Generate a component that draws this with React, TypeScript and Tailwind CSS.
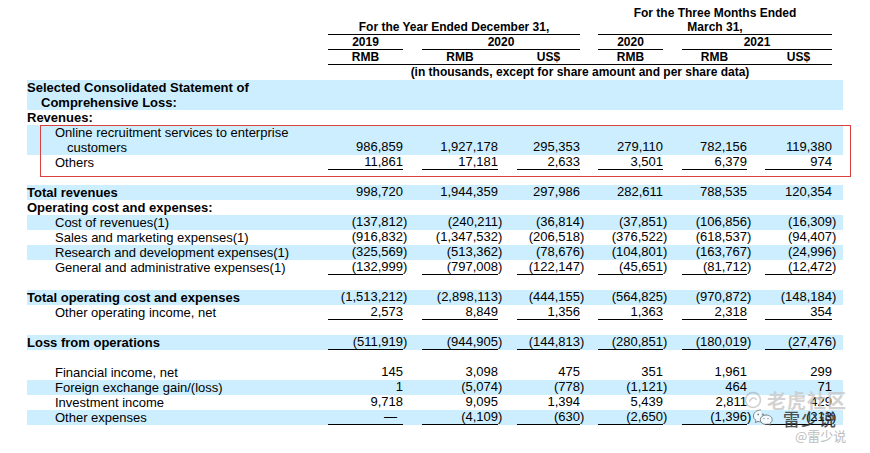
import type { ReactNode } from "react";

type Row = {
  label?: string[];
  indent?: "none" | "item";
  bold?: boolean;
  blue?: boolean;
  line?: boolean;
  vals?: string[];
};

const colW = ["w-[75px]", "w-[76px]", "w-[63px]", "w-[65px]", "w-[65px]", "w-[67px]"];
const grid = "grid grid-cols-[301px_94px_95px_81px_84px_83px_78px]";

const rows: Row[] = [
  { label: ["Selected Consolidated Statement of", "Comprehensive Loss:"], bold: true, blue: true },
  { label: ["Revenues:"], bold: true },
  {
    label: ["Online recruitment services to enterprise", "customers"],
    indent: "item",
    blue: true,
    vals: ["986,859", "1,927,178", "295,353", "279,110", "782,156", "119,380"],
  },
  {
    label: ["Others"],
    indent: "item",
    line: true,
    vals: ["11,861", "17,181", "2,633", "3,501", "6,379", "974"],
  },
  {},
  {
    label: ["Total revenues"],
    bold: true,
    blue: true,
    vals: ["998,720", "1,944,359", "297,986", "282,611", "788,535", "120,354"],
  },
  { label: ["Operating cost and expenses:"], bold: true },
  {
    label: ["Cost of revenues(1)"],
    indent: "item",
    blue: true,
    vals: ["(137,812)", "(240,211)", "(36,814)", "(37,851)", "(106,856)", "(16,309)"],
  },
  {
    label: ["Sales and marketing expenses(1)"],
    indent: "item",
    vals: ["(916,832)", "(1,347,532)", "(206,518)", "(376,522)", "(618,537)", "(94,407)"],
  },
  {
    label: ["Research and development expenses(1)"],
    indent: "item",
    blue: true,
    vals: ["(325,569)", "(513,362)", "(78,676)", "(104,801)", "(163,767)", "(24,996)"],
  },
  {
    label: ["General and administrative expenses(1)"],
    indent: "item",
    line: true,
    vals: ["(132,999)", "(797,008)", "(122,147)", "(45,651)", "(81,712)", "(12,472)"],
  },
  {},
  {
    label: ["Total operating cost and expenses"],
    bold: true,
    blue: true,
    vals: ["(1,513,212)", "(2,898,113)", "(444,155)", "(564,825)", "(970,872)", "(148,184)"],
  },
  {
    label: ["Other operating income, net"],
    indent: "item",
    line: true,
    vals: ["2,573", "8,849", "1,356", "1,363", "2,318", "354"],
  },
  {},
  {
    label: ["Loss from operations"],
    bold: true,
    blue: true,
    line: true,
    vals: ["(511,919)", "(944,905)", "(144,813)", "(280,851)", "(180,019)", "(27,476)"],
  },
  {},
  {
    label: ["Financial income, net"],
    indent: "item",
    vals: ["145", "3,098", "475", "351", "1,961", "299"],
  },
  {
    label: ["Foreign exchange gain/(loss)"],
    indent: "item",
    blue: true,
    vals: ["1", "(5,074)", "(778)", "(1,121)", "464", "71"],
  },
  {
    label: ["Investment income"],
    indent: "item",
    vals: ["9,718", "9,095", "1,394", "5,439", "2,811", "429"],
  },
  {
    label: ["Other expenses"],
    indent: "item",
    blue: true,
    line: true,
    vals: ["—", "(4,109)", "(630)", "(2,650)", "(1,396)", "(213)"],
  },
];

function Amount({ v }: { v: string }) {
  if (v === "—") return <span className="pr-[6px]">—</span>;
  if (v.startsWith("(")) {
    return (
      <>
        {v.slice(0, -1)}
        <span className="inline-block w-0">)</span>
      </>
    );
  }
  return <>{v}</>;
}

function TableRow({ row }: { row: Row }) {
  if (!row.label) return <div className="h-[15px]" />;
  const lines = row.label;
  return (
    <div className={`${grid} ${row.blue ? "bg-[#cceeff]" : ""}`}>
      <div className={`leading-[15px] ${row.bold ? "font-bold" : ""}`}>
        {lines.map((t, i) => (
          <div
            key={t}
            className={
              row.indent === "item"
                ? i === 0
                  ? "pl-[28px]"
                  : "pl-[40px]"
                : i === 0
                  ? "pl-0"
                  : "pl-[14px]"
            }
          >
            {t}
          </div>
        ))}
      </div>
      {(row.vals ?? ["", "", "", "", "", ""]).map((v, i) => (
        <div key={i} className="self-end">
          <div
            className={`box-border h-[15px] border-b text-right leading-[14px] ${colW[i]} ${
              row.line && row.vals ? "border-black" : "border-transparent"
            }`}
          >
            <Amount v={v} />
          </div>
        </div>
      ))}
    </div>
  );
}

function HeadCell({ w, line, children }: { w: string; line?: boolean; children: ReactNode }) {
  return (
    <div
      className={`box-border h-[15px] border-b text-center leading-[14px] ${w} ${
        line ? "border-black" : "border-transparent"
      }`}
    >
      {children}
    </div>
  );
}

function Watermark() {
  return (
    <div className="pointer-events-none absolute left-[744px] top-[391px] h-[52px] w-[120px]">
      <div className="flex items-center gap-[5px]">
        <svg width="18" height="18" viewBox="0 0 18 18" className="opacity-40">
          <circle cx="9" cy="9" r="7.5" fill="none" stroke="#888" strokeWidth="1.6" />
          <path d="M5.5 10.5 C7 6, 11 6, 12.5 9" fill="none" stroke="#888" strokeWidth="1.4" />
        </svg>
        <span className="font-['Noto_Sans_CJK_SC',sans-serif] text-[19px] font-bold leading-[18px] tracking-[1px] text-[#c8c8c8] opacity-80">
          老虎社区
        </span>
      </div>
      <div className="mt-[-1px] flex items-center gap-[9px] pl-[8px]">
        <svg width="22" height="20" viewBox="0 0 22 20" className="opacity-80">
          <path
            d="M9 2 C4.5 2 1.5 4.8 1.5 8 C1.5 9.8 2.4 11.3 4 12.4 L3.4 14.6 L6 13.4 C7 13.7 8 13.9 9 13.9"
            fill="#fff"
            stroke="#666"
            strokeWidth="1"
          />
          <path
            d="M14 7 C10.8 7 8.3 9.1 8.3 11.7 C8.3 14.3 10.8 16.4 14 16.4 C14.8 16.4 15.5 16.3 16.2 16.1 L18.4 17.2 L17.9 15.3 C19.3 14.4 20.2 13.1 20.2 11.7 C20.2 9.1 17.5 7 14 7 Z"
            fill="#fff"
            stroke="#666"
            strokeWidth="1"
          />
          <circle cx="6.2" cy="6.4" r="0.9" fill="#666" />
          <circle cx="11" cy="6.4" r="0.9" fill="#666" />
          <circle cx="12" cy="10.6" r="0.7" fill="#666" />
          <circle cx="16" cy="10.6" r="0.7" fill="#666" />
        </svg>
        <span className="font-['Noto_Sans_CJK_SC',sans-serif] text-[17px] font-medium leading-[19px] tracking-[1px] text-[#333] opacity-85">
          雷少说
        </span>
      </div>
      <div className="pl-[51px] font-['Noto_Sans_CJK_SC',sans-serif] text-[13px] leading-[15px] text-[#bdbdbd]">
        @雷少说
      </div>
    </div>
  );
}

export default function App() {
  return (
    <div className="relative h-[453px] w-[870px] overflow-hidden bg-white font-['Liberation_Sans',Arial,sans-serif] text-[13px] text-black">
      <div className="ml-[27px] w-[816px]">
        {/* header */}
        <div className="pt-[6px] text-[12px] font-bold">
          <div className={grid}>
            <div />
            <div className="col-span-3 flex items-end">
              <div className="box-border w-[252px] border-b border-black text-center leading-[14px]">
                For the Year Ended December 31,
              </div>
            </div>
            <div className="col-span-3">
              <div className="box-border w-[234px] border-b border-black text-center leading-[14px]">
                For the Three Months Ended
                <br />
                March 31,
              </div>
            </div>
          </div>
          <div className={grid}>
            <div />
            <div>
              <HeadCell w="w-[75px]" line>
                2019
              </HeadCell>
            </div>
            <div className="col-span-2">
              <HeadCell w="w-[158px]" line>
                2020
              </HeadCell>
            </div>
            <div>
              <HeadCell w="w-[65px]" line>
                2020
              </HeadCell>
            </div>
            <div className="col-span-2">
              <HeadCell w="w-[150px]" line>
                2021
              </HeadCell>
            </div>
          </div>
          <div className={grid}>
            <div />
            <div className="col-span-6">
              <div className="grid w-[504px] grid-cols-[94px_95px_81px_84px_83px_67px] border-b border-black">
                {["RMB", "RMB", "US$", "RMB", "RMB", "US$"].map((t, i) => (
                  <div key={i} className={`h-[14px] text-center leading-[14px] ${colW[i]}`}>
                    {t}
                  </div>
                ))}
              </div>
            </div>
          </div>
          <div className={grid}>
            <div />
            <div className="col-span-6">
              <div className="h-[15px] w-[504px] text-center leading-[15px]">
                (in thousands, except for share amount and per share data)
              </div>
            </div>
          </div>
        </div>

        {/* body */}
        {rows.map((r, i) => (
          <TableRow key={i} row={r} />
        ))}
      </div>

      {/* annotation box */}
      <div className="pointer-events-none absolute left-[40px] top-[125px] h-[52px] w-[811px] border border-[#d9413f]" />

      <Watermark />
    </div>
  );
}
